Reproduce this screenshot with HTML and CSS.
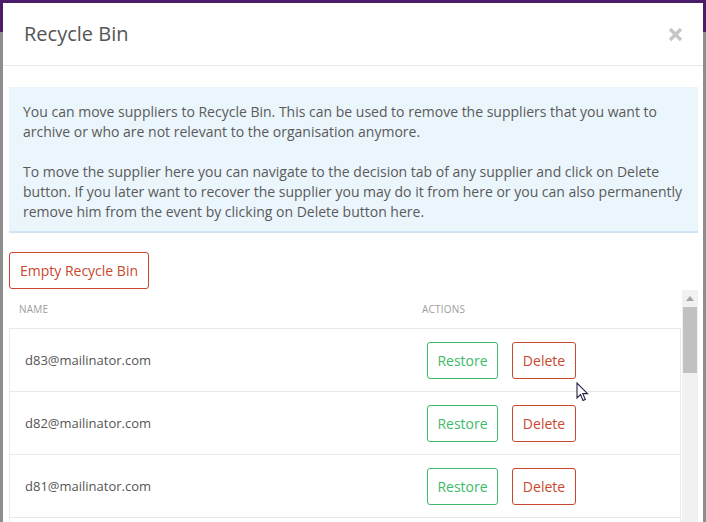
FILE: index.html
```html
<!DOCTYPE html>
<html>
<head>
<meta charset="utf-8">
<link rel="stylesheet" href="styles.css">
</head>
<body>
<div class="page">
  <div class="navbar"></div>
</div>
<div class="modal">
  <div class="modal-header">
    <h4 class="modal-title">Recycle Bin</h4>
    <span class="close" aria-label="Close">
      <svg width="15" height="15" viewBox="0 0 15 15"><path d="M2 2 L13 13 M13 2 L2 13" stroke="#c6c6c6" stroke-width="3.4" stroke-linecap="butt"/></svg>
    </span>
  </div>
  <div class="modal-body">
    <div class="alert">
      <p>You can move suppliers to Recycle Bin. This can be used to remove the suppliers that you want to archive or who are not relevant to the organisation anymore.</p>
      <p>To move the supplier here you can navigate to the decision tab of any supplier and click on Delete button. If you later want to recover the supplier you may do it from here or you can also permanently remove him from the event by clicking on Delete button here.</p>
    </div>
    <button class="btn btn-red btn-empty">Empty Recycle Bin</button>
    <div class="scroll">
      <div class="table">
        <div class="thead">
          <span>Name</span>
          <span>Actions</span>
        </div>
        <div class="row">
          <span class="email">d83@mailinator.com</span>
          <div class="actions"><button class="btn btn-green">Restore</button><button class="btn btn-red">Delete</button></div>
        </div>
        <div class="row">
          <span class="email">d82@mailinator.com</span>
          <div class="actions"><button class="btn btn-green">Restore</button><button class="btn btn-red">Delete</button></div>
        </div>
        <div class="row">
          <span class="email">d81@mailinator.com</span>
          <div class="actions"><button class="btn btn-green">Restore</button><button class="btn btn-red">Delete</button></div>
        </div>
        <div class="row"></div>
      </div>
      <div class="scrollbar">
        <div class="arrow"></div>
        <div class="thumb"></div>
      </div>
    </div>
  </div>
</div>
<svg class="cursor" width="14" height="22" viewBox="0 0 14 22"><path d="M1 1 L1 16 L4.5 12.5 L7 18.5 L9.3 17.5 L6.8 11.6 L11.5 11.6 Z" fill="#fff" stroke="#2a1f45" stroke-width="1.1" stroke-linejoin="miter"/></svg>
</body>
</html>
```

FILE: styles.css
```css
html, body {
  margin: 0;
  padding: 0;
  width: 706px;
  height: 522px;
  overflow: hidden;
}
body {
  background: #8e8e8e;
  font-family: "Open Sans", "Liberation Sans", sans-serif;
  color: #555;
  position: relative;
}
.navbar {
  height: 32px;
  background: #4a1c6a;
}
.modal {
  position: absolute;
  left: 3px;
  top: 3px;
  width: 700px;
  height: 560px;
  background: #fff;
  overflow: hidden;
}
.modal-header {
  display: flex;
  align-items: center;
  justify-content: space-between;
  padding: 17px 20px 17px 21px;
  border-bottom: 1px solid #e8e8e8;
}
.modal-title {
  margin: 0;
  font-size: 20px;
  line-height: 28px;
  font-weight: 400;
  color: #555;
}
.close {
  display: flex;
  width: 15px;
  height: 15px;
}
.modal-body {
  padding: 21px 5px 0 6px;
}
.alert {
  background: #ebf5fc;
  border-bottom: 2px solid #cfe5f5;
  padding: 15px 8px 9px 14px;
  font-size: 14px;
  line-height: 20px;
  color: #5a5a5a;
}
.alert p {
  margin: 0 0 20px;
}
.alert p:last-child {
  margin-bottom: 0;
}
.btn {
  display: inline-flex;
  align-items: center;
  justify-content: center;
  height: 37px;
  padding: 0 10px;
  background: #fff;
  border: 1px solid;
  border-radius: 3px;
  font-family: "Open Sans", "Liberation Sans", sans-serif;
  font-size: 14px;
  white-space: nowrap;
  box-sizing: border-box;
}
.btn-red {
  border-color: #c9472f;
  color: #c9472f;
}
.btn-green {
  border-color: #3dba6b;
  color: #3dba6b;
}
.btn-empty {
  margin-top: 19px;
  width: 140px;
  padding: 0;
}
.scroll {
  display: flex;
  gap: 1px;
  margin-top: 1px;
}
.table {
  flex: 1;
}
.thead {
  display: grid;
  grid-template-columns: 403px 1fr;
  align-items: center;
  height: 38px;
  padding: 0 10px;
  font-size: 10px;
  letter-spacing: 0.2px;
  text-transform: uppercase;
  color: #9d9d9d;
}
.row {
  display: grid;
  grid-template-columns: 402px 1fr;
  align-items: center;
  height: 62px;
  padding: 0 15px;
  border: 1px solid #e8e8e8;
  border-bottom: none;
}
.email {
  font-size: 13px;
  color: #555;
}
.actions {
  display: flex;
  gap: 14px;
}
.actions .btn-green {
  width: 71px;
}
.actions .btn-red {
  width: 64px;
}
.scrollbar {
  width: 16px;
  background: #f1f1f1;
  display: flex;
  flex-direction: column;
  align-items: center;
}
.arrow {
  width: 0;
  height: 0;
  margin-top: 6px;
  border-left: 4.5px solid transparent;
  border-right: 4.5px solid transparent;
  border-bottom: 5px solid #a3a3a3;
}
.thumb {
  width: 14px;
  height: 66px;
  margin-top: 6px;
  background: #c1c1c1;
}
.cursor {
  position: absolute;
  left: 576px;
  top: 382px;
}
```
